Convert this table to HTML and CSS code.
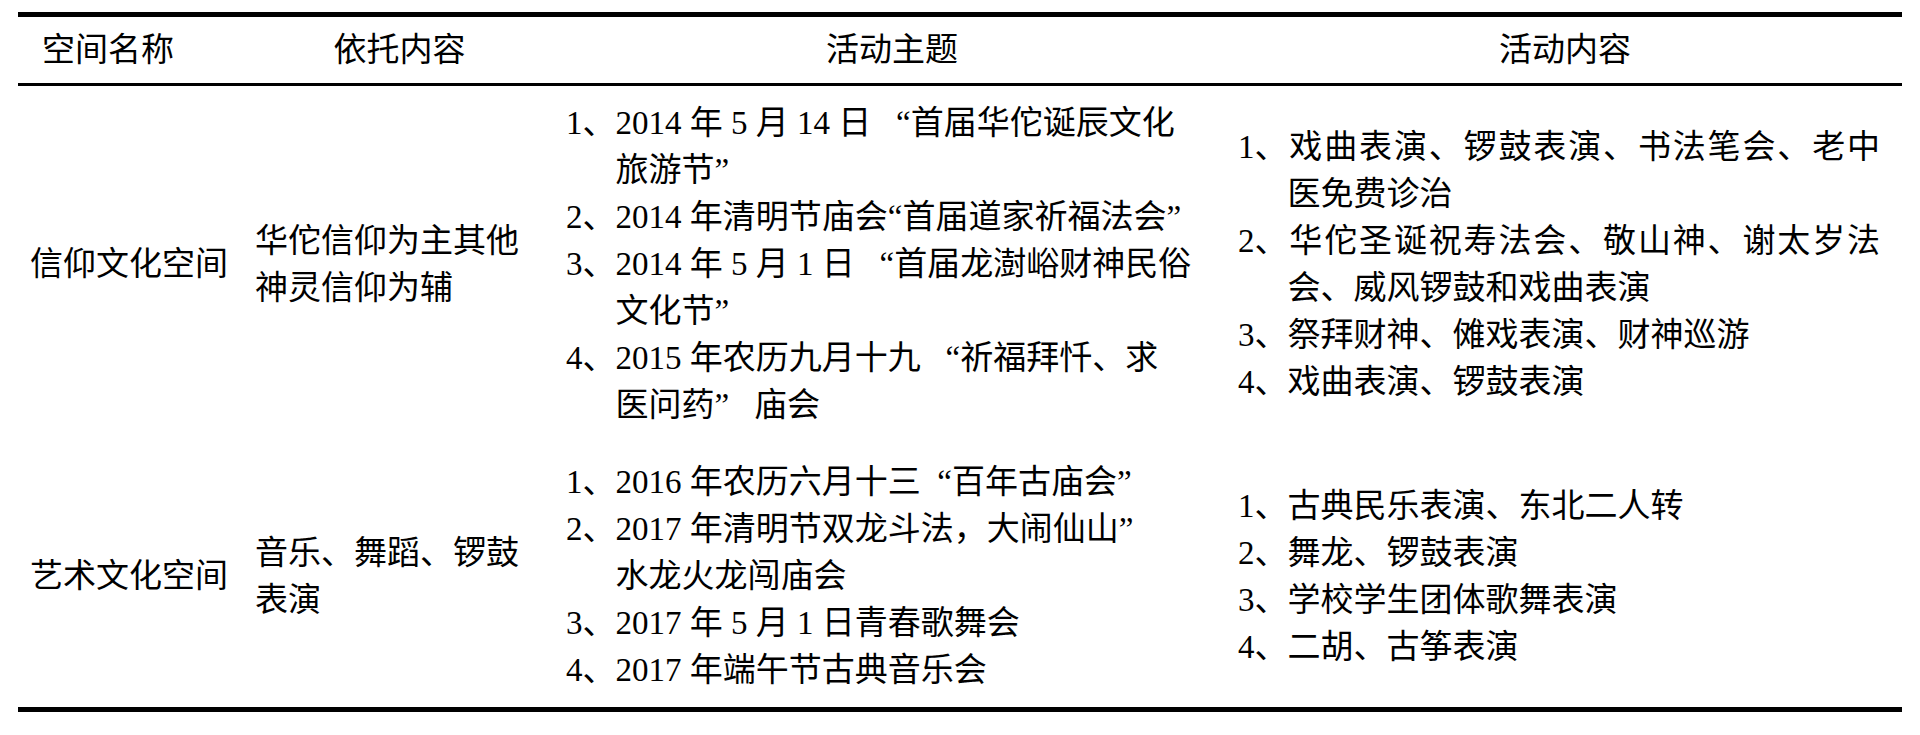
FILE: index.html
```html
<!DOCTYPE html>
<html lang="zh-CN">
<head>
<meta charset="utf-8">
<title>空间活动表</title>
<link rel="stylesheet" href="styles.css">
</head>
<body>
<div class="page">
  <div class="table">
    <div class="th th-first">空间名称</div>
    <div class="th">依托内容</div>
    <div class="th">活动主题</div>
    <div class="th">活动内容</div>

    <div class="td r1 c1">信仰文化空间</div>
    <div class="td r1 c2">华佗信仰为主其他<br>神灵信仰为辅</div>
    <div class="td r1 c3">
      <div class="item"><span class="n">1、</span>2014 年 5 月 14 日&ensp; “首届华佗诞辰文化<br>旅游节”</div>
      <div class="item"><span class="n">2、</span>2014 年清明节庙会“首届道家祈福法会”</div>
      <div class="item"><span class="n">3、</span>2014 年 5 月 1 日&ensp; “首届龙澍峪财神民俗<br>文化节”</div>
      <div class="item"><span class="n">4、</span>2015 年农历九月十九&ensp; “祈福拜忏、求<br>医问药”&ensp; 庙会</div>
    </div>
    <div class="td r1 c4">
      <div class="item"><span class="jl"><span class="n">1、</span>戏曲表演、锣鼓表演、书法笔会、老中</span>医免费诊治</div>
      <div class="item"><span class="jl"><span class="n">2、</span>华佗圣诞祝寿法会、敬山神、谢太岁法</span>会、威风锣鼓和戏曲表演</div>
      <div class="item"><span class="n">3、</span>祭拜财神、傩戏表演、财神巡游</div>
      <div class="item"><span class="n">4、</span>戏曲表演、锣鼓表演</div>
    </div>

    <div class="td r2 c1">艺术文化空间</div>
    <div class="td r2 c2">音乐、舞蹈、锣鼓<br>表演</div>
    <div class="td r2 c3">
      <div class="item"><span class="n">1、</span>2016 年农历六月十三&ensp;“百年古庙会”</div>
      <div class="item"><span class="n">2、</span>2017 年清明节双龙斗法，大闹仙山”<br>水龙火龙闯庙会</div>
      <div class="item"><span class="n">3、</span>2017 年 5 月 1 日青春歌舞会</div>
      <div class="item"><span class="n">4、</span>2017 年端午节古典音乐会</div>
    </div>
    <div class="td r2 c4">
      <div class="item"><span class="n">1、</span>古典民乐表演、东北二人转</div>
      <div class="item"><span class="n">2、</span>舞龙、锣鼓表演</div>
      <div class="item"><span class="n">3、</span>学校学生团体歌舞表演</div>
      <div class="item"><span class="n">4、</span>二胡、古筝表演</div>
    </div>
  </div>
</div>
</body>
</html>
```
FILE: styles.css
```css
html, body {
  margin: 0;
  padding: 0;
  background: #ffffff;
}

body {
  font-family: "Liberation Serif", "Noto Sans CJK SC", sans-serif;
  font-size: 33px;
  color: #000000;
}

.page {
  padding: 12px 18px 0 18px;
}

.table {
  width: 1884px;
  display: grid;
  grid-template-columns: 225px 313px 672px 674px;
  border-top: 5px solid #000;
  border-bottom: 5px solid #000;
}

.th {
  height: 66px;
  line-height: 66px;
  text-align: center;
  border-bottom: 3px solid #000;
  white-space: nowrap;
}

.th-first {
  text-align: left;
  padding-left: 24px;
}

.td {
  align-self: center;
  line-height: 47px;
  white-space: nowrap;
}

.r1 {
  padding-top: 14px;
  padding-bottom: 12px;
}

.r2 {
  padding-top: 18px;
  padding-bottom: 13px;
}

.c1 {
  padding-left: 12px;
}

.c2 {
  padding-left: 12px;
}

.c3 {
  padding-left: 10px;
}

.c4 {
  padding-left: 10px;
  padding-right: 22px;
}

.item {
  padding-left: 1.5em;
}

.n {
  display: inline-block;
  width: 1.5em;
  margin-left: -1.5em;
}

.jl {
  display: block;
  text-align: justify;
  text-align-last: justify;
}
```
